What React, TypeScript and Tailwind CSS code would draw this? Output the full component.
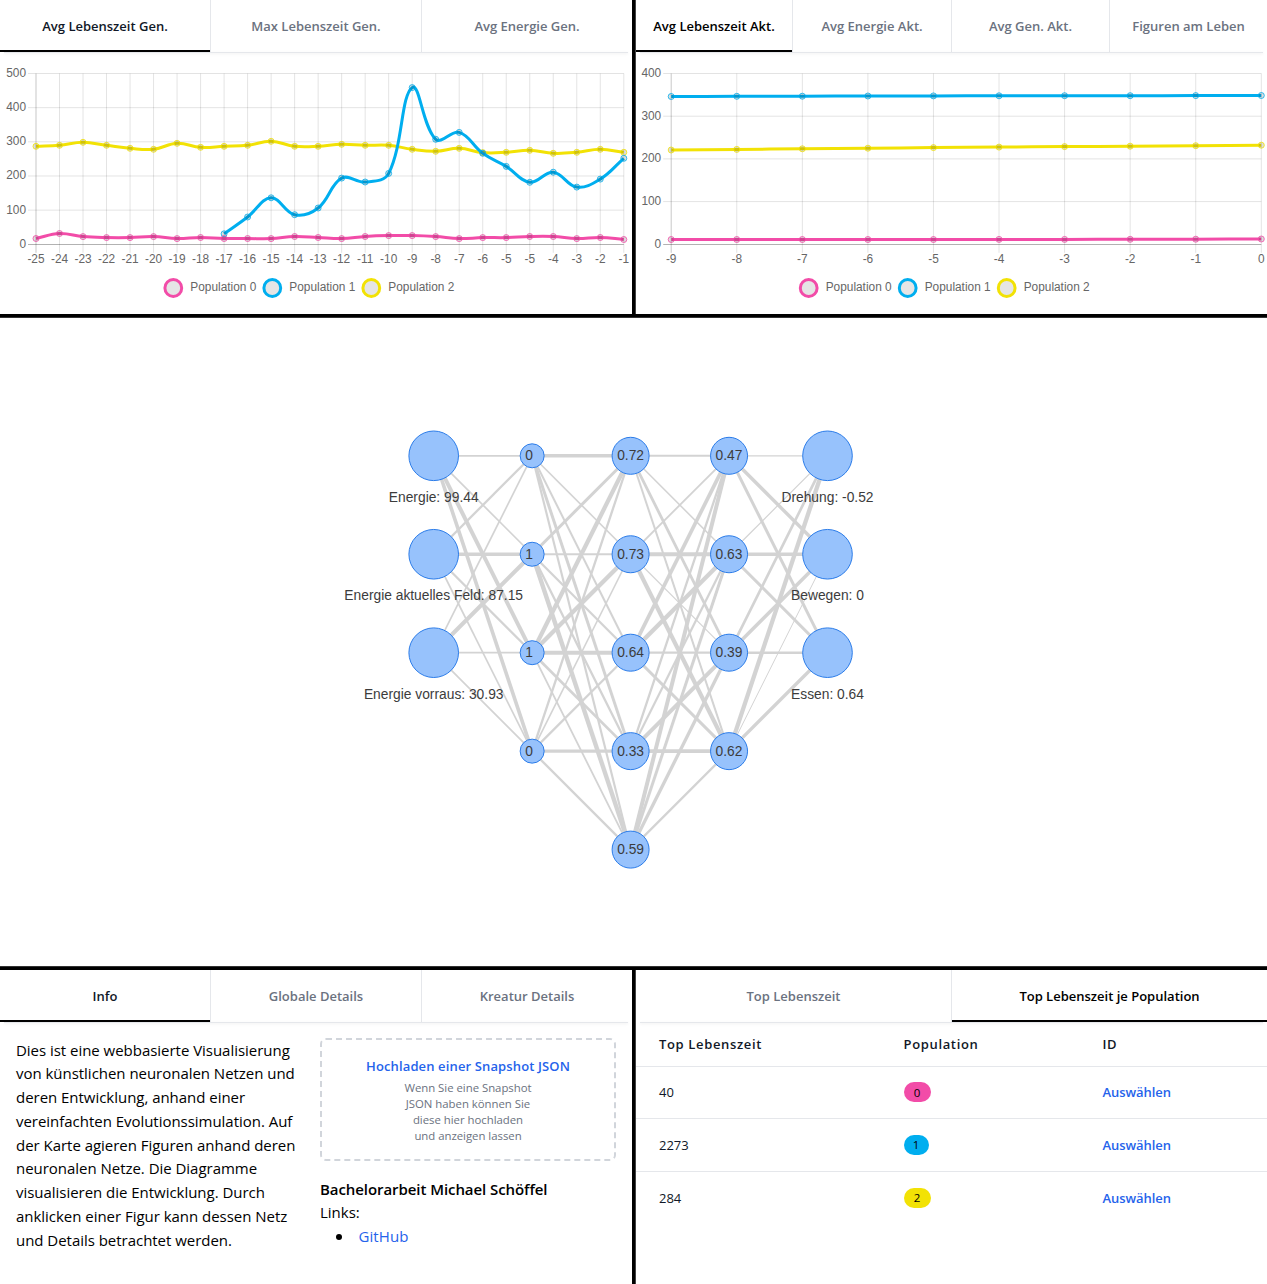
import React from 'react';
import clsx from 'clsx';

const PINK = '#f24ca8';
const BLUE = '#00aeef';
const YELLOW = '#f2e205';

/* ---------- Tabs ---------- */

function Tabs({ labels, active, grid, dark }: { labels: string[]; active: number; grid: string; dark?: boolean }) {
  return (
    <nav className={clsx('grid h-[52px] shrink-0', grid)}>
      {labels.map((label, i) => (
        <a
          key={label}
          className={clsx(
            'flex flex-col text-[13px] font-semibold whitespace-nowrap',
            i > 0 && i !== active && 'border-l border-[#e5e7eb]',
            i + 1 === active && 'border-r border-[#e5e7eb]',
            i === active ? 'text-[#111827]' : 'text-[#6b7280]',
            dark && i === active && 'text-black',
          )}
        >
          <span className="flex flex-1 items-center justify-center pt-1">{label}</span>
          <span className={clsx('h-0.5', i === active && 'bg-black')} />
        </a>
      ))}
    </nav>
  );
}

function Rule() {
  return <div className="mx-1 h-px shrink-0 bg-[#e5e7eb] shadow-sm" />;
}

/* ---------- Line charts ---------- */

type Pt = [number, number];
type Series = { color: string; points: Pt[] };

const TENSION = 0.4;

// Cardinal spline whose control points are weighted by segment length.
function splinePath(pts: Pt[], top: number, bottom: number): string {
  const cap = (v: number) => Math.min(bottom, Math.max(top, v));
  const ctrl = pts.map((p, i) => {
    const prev = pts[Math.max(0, i - 1)];
    const next = pts[Math.min(pts.length - 1, i + 1)];
    const d01 = Math.hypot(p[0] - prev[0], p[1] - prev[1]);
    const d12 = Math.hypot(next[0] - p[0], next[1] - p[1]);
    const fa = (TENSION * d01) / (d01 + d12 || 1);
    const fb = (TENSION * d12) / (d01 + d12 || 1);
    const dx = next[0] - prev[0];
    const dy = next[1] - prev[1];
    return { a: [p[0] - fa * dx, cap(p[1] - fa * dy)], b: [p[0] + fb * dx, cap(p[1] + fb * dy)] };
  });
  return pts
    .map((p, i) => (i === 0 ? `M${p[0]},${p[1]}` : `C${ctrl[i - 1].b.join(',')} ${ctrl[i].a.join(',')} ${p[0]},${p[1]}`))
    .join('');
}

function Chart(props: {
  width: number;
  x0: number;
  x1: number;
  xLabels: string[];
  yLabels: string[];
  legendX: number;
  series: Series[];
}) {
  const { width, x0, x1, xLabels, yLabels, legendX, series } = props;
  const top = 73.5;
  const bottom = 244.3;
  const step = (x1 - x0) / (xLabels.length - 1);
  const yStep = (bottom - top) / (yLabels.length - 1);
  return (
    <svg
      width={width}
      height={261}
      viewBox={`0 53 ${width} 261`}
      className="block font-['Liberation_Sans',Arial,sans-serif] text-[11.87px]"
    >
      <g stroke="#000" strokeOpacity={0.11}>
        {xLabels.map((_, i) => (
          <line key={i} x1={x0 + i * step} x2={x0 + i * step} y1={top} y2={bottom + 8.5} strokeOpacity={i === 0 ? 0.22 : 0.11} />
        ))}
        {yLabels.map((_, i) => {
          const last = i === yLabels.length - 1;
          const y = last ? 244.5 : top + i * yStep;
          return <line key={i} x1={x0 - 8} x2={x1} y1={y} y2={y} strokeOpacity={last ? 0.3 : 0.11} />;
        })}
      </g>
      {series.map((s) => (
        <g key={s.color}>
          <path d={splinePath(s.points, top, bottom)} fill="none" stroke={s.color} strokeWidth={3} />
          {s.points.map(([x, y], i) => (
            <circle key={i} cx={x} cy={y} r={3} fill="#000" fillOpacity={0.13} stroke={s.color} strokeOpacity={0.8} />
          ))}
        </g>
      ))}
      <g fill="#666">
        {yLabels.map((t, i) => (
          <text key={t} x={x0 - 10} y={top + i * yStep + 3.5} textAnchor="end">
            {t}
          </text>
        ))}
        {xLabels.map((t, i) => (
          <text key={i} x={x0 + i * step} y={263} textAnchor="middle">
            {t}
          </text>
        ))}
        {[PINK, BLUE, YELLOW].map((c, i) => (
          <g key={c}>
            <circle cx={legendX + i * 99} cy={288} r={8.4} fill="#e5e5e5" stroke={c} strokeWidth={3} />
            <text x={legendX + i * 99 + 17} y={291}>
              Population {i}
            </text>
          </g>
        ))}
      </g>
    </svg>
  );
}

const LX0 = 36;
const LX1 = 623.8;
const lx = (i: number) => LX0 + (i * (LX1 - LX0)) / 25;
const genSeries: Series[] = [
  {
    color: YELLOW,
    points: [
      146, 145, 142, 145, 148, 149, 143, 147, 146, 145, 141, 146, 146, 144, 145, 145, 149, 151, 148, 152.3, 152, 150, 153, 152, 149, 152,
    ].map((y, i): Pt => [lx(i), y + 0.3]),
  },
  {
    color: BLUE,
    points: [233.8, 217, 197.8, 214.7, 208, 178.1, 182, 173.4, 87.6, 139.3, 132.4, 153.3, 166.4, 182.3, 172.2, 187.1, 179.1, 158.3].map(
      (y, i): Pt => [lx(i + 8), y],
    ),
  },
  {
    color: PINK,
    points: [
      238.2, 233.2, 236.3, 237.3, 237.3, 236.3, 238.3, 237.2, 238.2, 238.2, 238.3, 236.2, 237.2, 238.3, 236.2, 235.3, 235.3, 236.3, 238.3, 237.3,
      237.3, 236.2, 236.2, 238.3, 237.2, 239.2,
    ].map((y, i): Pt => [lx(i), y + 0.3]),
  },
];
const genLabels = '-25 -24 -23 -22 -21 -20 -19 -18 -17 -16 -15 -14 -13 -12 -11 -10 -9 -8 -7 -6 -5 -5 -4 -3 -2 -1'.split(' ');

const RX0 = 35.2;
const RX1 = 625.3;
const rx = (i: number) => RX0 + (i * (RX1 - RX0)) / 9;
const actSeries: Series[] = [
  { color: YELLOW, points: [150, 149.4, 148.8, 148.2, 147.6, 147.1, 146.6, 146.2, 145.7, 145.2].map((y, i): Pt => [rx(i), y]) },
  { color: BLUE, points: [96.5, 96.3, 96.2, 96, 95.9, 95.8, 95.7, 95.7, 95.6, 95.5].map((y, i): Pt => [rx(i), y]) },
  { color: PINK, points: [239.5, 239.5, 239.5, 239.5, 239.5, 239.4, 239.4, 239.3, 239.2, 239].map((y, i): Pt => [rx(i), y]) },
];

/* ---------- Neural network ---------- */

type NetNode = { r: number; text: string; below?: boolean };
const layers: NetNode[][] = [
  [
    { r: 24.8, text: 'Energie: 99.44', below: true },
    { r: 24.8, text: 'Energie aktuelles Feld: 87.15', below: true },
    { r: 24.8, text: 'Energie vorraus: 30.93', below: true },
  ],
  ['0', '1', '1', '0'].map((text) => ({ r: 12, text })),
  ['0.72', '0.73', '0.64', '0.33', '0.59'].map((text) => ({ r: 18.5, text })),
  ['0.47', '0.63', '0.39', '0.62'].map((text) => ({ r: 18.5, text })),
  [
    { r: 24.8, text: 'Drehung: -0.52', below: true },
    { r: 24.8, text: 'Bewegen: 0', below: true },
    { r: 24.8, text: 'Essen: 0.64', below: true },
  ],
];

// weights[layer][from][to] is the stroke width of the connection
const weights: number[][][] = [
  [
    [1.7, 1.7, 4, 3.6],
    [2.3, 3.6, 2.3, 1.7],
    [1.7, 4.1, 1.7, 1.7],
  ],
  [
    [3.5, 1.6, 2, 3, 2.2],
    [3, 2, 2.2, 2.3, 4.4],
    [4.2, 4.3, 4, 2.7, 1.8],
    [2.3, 1.6, 2.2, 3.4, 2.3],
  ],
  [
    [2, 1.5, 2.8, 2],
    [1.8, 4, 1.1, 4.2],
    [3.7, 4.3, 2.2, 3],
    [2.3, 2.2, 4, 3.8],
    [4, 3, 3.3, 2.3],
  ],
  [
    [1.3, 3.4, 3],
    [1.2, 3.6, 3],
    [2.7, 3.5, 2.6],
    [4.3, 1, 3.4],
  ],
];

const nx = (layer: number) => 433.7 + layer * 98.45;
const ny = (row: number) => 137.8 + row * 98.45;

function Network() {
  return (
    <svg width={1267} height={648} className="block font-['Liberation_Sans',Arial,sans-serif] text-[13.8px]">
      <g stroke="#d3d3d3">
        {weights.map((from, l) =>
          from.map((to, i) =>
            to.map((w, j) => <line key={`${l}-${i}-${j}`} x1={nx(l)} y1={ny(i)} x2={nx(l + 1)} y2={ny(j)} strokeWidth={w} />),
          ),
        )}
      </g>
      {layers.map((nodes, l) =>
        nodes.map((n, i) => (
          <g key={`${l}-${i}`}>
            <circle cx={nx(l)} cy={ny(i)} r={n.r} fill="#97c2fc" stroke="#2b7ce9" />
            <text x={l === 1 ? nx(l) - 3 : nx(l)} y={ny(i) + (n.below ? 45.8 : 4.4)} textAnchor="middle" fill="#3c3c3c">
              {n.text}
            </text>
          </g>
        )),
      )}
    </svg>
  );
}

/* ---------- Bottom panels ---------- */

const introLines = [
  'Dies ist eine webbasierte Visualisierung',
  'von künstlichen neuronalen Netzen und',
  'deren Entwicklung, anhand einer',
  'vereinfachten Evolutionssimulation. Auf',
  'der Karte agieren Figuren anhand deren',
  'neuronalen Netze. Die Diagramme',
  'visualisieren die Entwicklung. Durch',
  'anklicken einer Figur kann dessen Netz',
  'und Details betrachtet werden.',
];

function InfoPanel() {
  return (
    <section className="flex h-[314px] w-[632px] flex-col">
      <Tabs labels={['Info', 'Globale Details', 'Kreatur Details']} active={0} grid="grid-cols-[210px_211px_211px]" />
      <Rule />
      <div className="flex px-4 pt-[15px] text-[15px] leading-[23.8px] text-black">
        <p className="w-[304px] shrink-0 pt-[0.5px] tracking-[-0.03px] whitespace-nowrap">
          {introLines.map((line) => (
            <span key={line} className="block">
              {line}
            </span>
          ))}
        </p>
        <div className="w-[296px]">
          <div className="flex h-[123px] flex-col items-center rounded-md border-2 border-dashed border-[#d1d5db] pt-4 text-center">
            <a className="text-[13px] leading-5 font-semibold tracking-[0.13px] text-[#2563eb]">Hochladen einer Snapshot JSON</a>
            <p className="mt-1 text-[11.4px] leading-4 tracking-[-0.03px] whitespace-nowrap text-[#6b7280]">
              Wenn Sie eine Snapshot
              <br />
              JSON haben können Sie
              <br />
              diese hier hochladen
              <br />
              und anzeigen lassen
            </p>
          </div>
          <h3 className="mt-[16.6px] font-semibold tracking-[-0.07px]">Bachelorarbeit Michael Schöffel</h3>
          <p>Links:</p>
          <ul>
            <li className="flex items-center">
              <span className="ml-[15.5px] size-[6px] rounded-full bg-black" />
              <a className="ml-[17px] tracking-[0.08px] text-[#2563eb]">GitHub</a>
            </li>
          </ul>
        </div>
      </div>
    </section>
  );
}

const rows = [
  { value: '40', pop: '0', pill: 'w-[27px] bg-[#f24ca8]' },
  { value: '2273', pop: '1', pill: 'w-[25px] bg-[#00aeef]' },
  { value: '284', pop: '2', pill: 'w-[27px] bg-[#f2e205]' },
];

function TopPanel() {
  return (
    <section className="flex h-[314px] w-[631px] flex-col">
      <Tabs labels={['Top Lebenszeit', 'Top Lebenszeit je Population']} active={1} grid="grid-cols-[316px_315px]" dark />
      <Rule />
      <div className="divide-y divide-[#e5e7eb] text-[13px] text-[#111827]">
        <div className="grid h-[43.6px] grid-cols-[244.5px_199px_1fr] items-center pl-[23px] font-semibold tracking-[0.65px]">
          <span>Top Lebenszeit</span>
          <span>Population</span>
          <span>ID</span>
        </div>
        {rows.map((r) => (
          <div key={r.pop} className="grid h-[52.7px] grid-cols-[244.5px_199px_1fr] items-center pt-[0.5px] pl-[23px]">
            <span className="font-medium">{r.value}</span>
            <span className={clsx('mb-px flex h-5 items-center justify-center rounded-full text-[11.5px] text-black', r.pill)}>{r.pop}</span>
            <a className="font-semibold tracking-[-0.05px] text-[#2563eb]">Auswählen</a>
          </div>
        ))}
      </div>
    </section>
  );
}

function VDivider() {
  return <div className="h-[314px] w-1 border-r border-[#444] bg-black" />;
}

export default function App() {
  return (
    <div className="h-[1284px] w-[1267px] overflow-hidden bg-white font-['Open_Sans','Noto_Sans',sans-serif]">
      <div className="flex h-[314px]">
        <section className="flex w-[632px] flex-col">
          <Tabs labels={['Avg Lebenszeit Gen.', 'Max Lebenszeit Gen.', 'Avg Energie Gen.']} active={0} grid="grid-cols-[210px_211px_211px]" />
          <Rule />
          <Chart
            width={632}
            x0={LX0}
            x1={LX1}
            xLabels={genLabels}
            yLabels={['500', '400', '300', '200', '100', '0']}
            legendX={173.3}
            series={genSeries}
          />
        </section>
        <VDivider />
        <section className="flex w-[631px] flex-col">
          <Tabs
            labels={['Avg Lebenszeit Akt.', 'Avg Energie Akt.', 'Avg Gen. Akt.', 'Figuren am Leben']}
            active={0}
            grid="grid-cols-[156px_159px_158px_158px]"
            dark
          />
          <Rule />
          <Chart
            width={631}
            x0={RX0}
            x1={RX1}
            xLabels={['-9', '-8', '-7', '-6', '-5', '-4', '-3', '-2', '-1', '0']}
            yLabels={['400', '300', '200', '100', '0']}
            legendX={172.7}
            series={actSeries}
          />
        </section>
      </div>
      <div className="h-1 border-b border-[#333] bg-black" />
      <Network />
      <div className="h-1 border-t border-[#333] bg-black" />
      <div className="flex h-[314px]">
        <InfoPanel />
        <VDivider />
        <TopPanel />
      </div>
    </div>
  );
}
